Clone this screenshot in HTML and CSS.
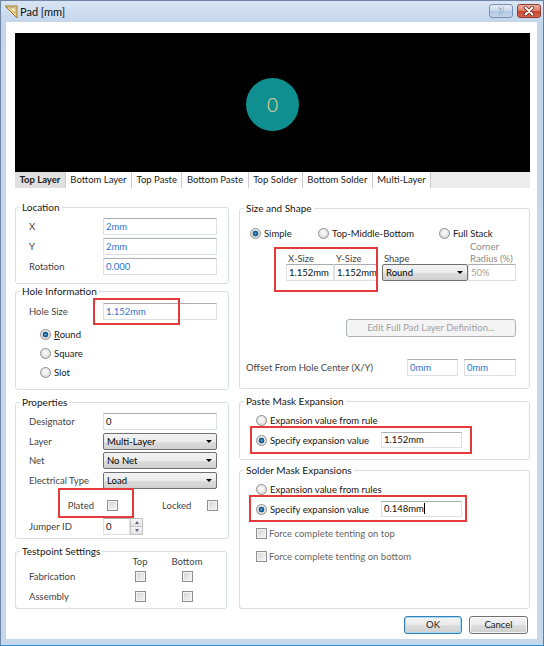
FILE: index.html
```html
<!DOCTYPE html>
<html>
<head>
<meta charset="utf-8">
<title>Pad [mm]</title>
<link rel="stylesheet" href="styles.css">
</head>
<body>
<div class="window">
  <div class="titlebar">
    <svg class="app-icon" width="14" height="14" viewBox="0 0 14 14">
      <path d="M1 1 L13 1 L13 13 Z" fill="#ecd089" stroke="#9b7b35" stroke-width="1" stroke-linejoin="round"/>
      <path d="M6 3 L11 3 L11 8 Z" fill="#fff8e0" stroke="#b5964a" stroke-width="0.6"/>
      <path d="M3 2 L4 3 M5 2 L6 3 M8 2 L9 3" stroke="#8a8a8a" stroke-width="0.8"/>
    </svg>
    <span class="title">Pad [mm]</span>
    <div class="caption-btn help">?</div>
    <div class="caption-btn close">
      <svg width="12" height="10" viewBox="0 0 12 10">
        <path d="M2.5 1.5 L9.5 8.5 M9.5 1.5 L2.5 8.5" stroke="#6a2a22" stroke-width="3.4" stroke-linecap="round"/>
        <path d="M2.5 1.5 L9.5 8.5 M9.5 1.5 L2.5 8.5" stroke="#ffffff" stroke-width="1.8" stroke-linecap="round"/>
      </svg>
    </div>
  </div>

  <div class="client">
    <div class="preview"><div class="pad">0</div></div>

    <div class="tabs">
      <div class="tab active">Top Layer</div>
      <div class="tab">Bottom Layer</div>
      <div class="tab">Top Paste</div>
      <div class="tab">Bottom Paste</div>
      <div class="tab">Top Solder</div>
      <div class="tab">Bottom Solder</div>
      <div class="tab">Multi-Layer</div>
    </div>

    <div class="columns">
      <div class="col col-left">
        <fieldset class="grp grp-location">
          <legend>Location</legend>
          <div class="form-grid pt5">
            <span class="lbl">X</span><div class="input blue">2mm</div>
            <span class="lbl">Y</span><div class="input blue">2mm</div>
            <span class="lbl">Rotation</span><div class="input blue">0.000</div>
          </div>
        </fieldset>

        <fieldset class="grp grp-hole">
          <legend>Hole Information</legend>
          <div class="form-grid pt6">
            <span class="lbl">Hole Size</span><div class="input blue">1.152mm</div>
          </div>
          <div class="radio-list">
            <div class="radio-item"><span class="radio on"></span><span><u>R</u>ound</span></div>
            <div class="radio-item"><span class="radio"></span><span>Square</span></div>
            <div class="radio-item"><span class="radio"></span><span>Slot</span></div>
          </div>
        </fieldset>

        <fieldset class="grp grp-props">
          <legend>Properties</legend>
          <div class="form-grid pt5 tight">
            <span class="lbl">Designator</span><div class="input">0</div>
            <span class="lbl">Layer</span><div class="combo">Multi-Layer</div>
            <span class="lbl">Net</span><div class="combo">No Net</div>
            <span class="lbl">Electrical Type</span><div class="combo">Load</div>
          </div>
          <div class="plated-row">
            <span class="lbl plated-lbl">Plated</span><span class="cb"></span>
            <span class="lbl locked-lbl">Locked</span><span class="cb"></span>
          </div>
          <div class="form-grid jumper-row">
            <span class="lbl">Jumper ID</span>
            <div class="spin">
              <div class="input spin-input">0</div>
              <div class="spin-btns"><span class="spin-up"></span><span class="spin-down"></span></div>
            </div>
          </div>
        </fieldset>

        <fieldset class="grp grp-testpoint">
          <legend>Testpoint Settings</legend>
          <div class="tp-grid">
            <span></span><span class="tp-head">Top</span><span class="tp-head">Bottom</span>
            <span class="lbl">Fabrication</span><span class="cb"></span><span class="cb"></span>
            <span class="lbl">Assembly</span><span class="cb"></span><span class="cb"></span>
          </div>
        </fieldset>

        <div class="mark mark-hole"></div>
        <div class="mark mark-plated"></div>
      </div>

      <div class="col col-right">
        <fieldset class="grp grp-size">
          <legend>Size and Shape</legend>
          <div class="size-body">
            <div class="mode-row">
              <div class="radio-item mode-simple"><span class="radio on"></span><span>Simple</span></div>
              <div class="radio-item mode-tmb"><span class="radio"></span><span>Top-Middle-Bottom</span></div>
              <div class="radio-item"><span class="radio"></span><span>Full Stack</span></div>
            </div>
            <div class="size-grid">
              <span></span><span></span><span></span><span></span><span class="hdr dim">Corner</span>
              <span class="hdr">X-Size</span><span class="hdr">Y-Size</span><span></span><span class="hdr">Shape</span><span class="hdr dim">Radius (%)</span>
              <div class="input">1.152mm</div><div class="input">1.152mm</div><span></span><div class="combo">Round</div><div class="input dim">50%</div>
            </div>
            <div class="edit-btn">Edit Full Pad Layer Definition...</div>
            <div class="offset-row">
              <span class="lbl offset-lbl">Offset From Hole Center (X/Y)</span>
              <div class="input blue off1">0mm</div>
              <div class="input blue off2">0mm</div>
            </div>
          </div>
        </fieldset>

        <fieldset class="grp grp-paste">
          <legend>Paste Mask Expansion</legend>
          <div class="mask-body">
            <div class="radio-item row14"><span class="radio"></span><span class="dark">Expansion value from rule</span></div>
            <div class="spec-row">
              <div class="radio-item spec-item"><span class="radio on"></span><span class="dark">Specify expansion value</span></div>
              <div class="input spec-input">1.152mm</div>
            </div>
          </div>
        </fieldset>

        <fieldset class="grp grp-solder">
          <legend>Solder Mask Expansions</legend>
          <div class="mask-body">
            <div class="radio-item row14"><span class="radio"></span><span class="dark">Expansion value from rules</span></div>
            <div class="spec-row">
              <div class="radio-item spec-item"><span class="radio on"></span><span class="dark">Specify expansion value</span></div>
              <div class="input spec-input">0.148mm<span class="caret"></span></div>
            </div>
            <div class="check-item"><span class="cb"></span><span class="muted">Force complete tenting on top</span></div>
            <div class="check-item"><span class="cb"></span><span class="muted">Force complete tenting on bottom</span></div>
          </div>
        </fieldset>

        <div class="mark mark-size"></div>
        <div class="mark mark-paste"></div>
        <div class="mark mark-solder"></div>
      </div>
    </div>

    <div class="buttons">
      <div class="btn default">OK</div>
      <div class="btn">Cancel</div>
    </div>
  </div>
</div>
</body>
</html>
```

FILE: styles.css
```css
* { box-sizing: border-box; }
html, body { margin: 0; padding: 0; }
body {
  width: 544px;
  height: 646px;
  overflow: hidden;
  font-family: Lato, "Open Sans", "Liberation Sans", sans-serif;
  font-size: 9.5px;
  color: #1c1c1c;
  background: #fff;
}

.window {
  width: 544px;
  height: 646px;
  display: flex;
  flex-direction: column;
  background: linear-gradient(#d9e5f3, #c4d6eb 21px, #c6d8ec);
  border: 1px solid #6f87a4;
  border-right: 1px solid #2f8fd6;
  border-bottom: 1px solid #2f8fd6;
}

/* ---------- title bar ---------- */
.titlebar {
  height: 21px;
  display: flex;
  align-items: center;
  padding-left: 3px;
  flex: none;
}
.app-icon { flex: none; }
.title {
  margin-left: 2px;
  font-size: 11px;
  color: #101010;
}
.caption-btn {
  align-self: flex-start;
  margin-top: 3px;
  width: 24px;
  height: 14px;
  border-radius: 3px;
  display: flex;
  align-items: center;
  justify-content: center;
}
.help {
  margin-left: auto;
  border: 1px solid #7890b0;
  background: linear-gradient(#e4edf7, #c9d9ec 50%, #b2c8e2 51%, #c4d7ec);
  color: #f7f9fc;
  font-weight: 700;
  font-size: 11px;
  line-height: 12px;
  text-shadow: 0 0 1px #3c5678, 0 0 1px #3c5678;
}
.close {
  margin-left: 4px;
  margin-right: 2px;
  border: 1px solid #8b3b31;
  background: linear-gradient(#eeb0a2, #dc7d6a 50%, #c5452f 51%, #d6674f);
}

/* ---------- client area ---------- */
.client {
  flex: 1;
  margin: 0 6px 6px 5px;
  background: #fff;
  padding: 11px 7px 0 9px;
  display: flex;
  flex-direction: column;
}

.preview {
  height: 139px;
  background: #000;
  display: flex;
  align-items: center;
  justify-content: center;
  padding-top: 3px;
}
.pad {
  width: 53px;
  height: 53px;
  border-radius: 50%;
  background: #0f8f8f;
  display: flex;
  align-items: center;
  justify-content: center;
  color: #f3d9a0;
  font-size: 19px;
  font-weight: 300;
}

.tabs {
  display: flex;
  height: 16px;
  background: #ececec;
  flex: none;
}
.tab {
  padding: 0 4.5px;
  line-height: 16px;
  background: #fff;
  border-right: 1px solid #cdcdcd;
  color: #1a1a1a;
  white-space: nowrap;
}
.tab.active {
  background: #e0e0e0;
  font-weight: 700;
}

.columns {
  display: flex;
  gap: 10px;
  margin-top: 13px;
}
.col {
  position: relative;
  display: flex;
  flex-direction: column;
}
.col-left { width: 214px; }
.col-right { width: 291px; margin-top: 1px; }

/* ---------- group boxes ---------- */
.grp {
  margin: 0;
  padding: 0;
  min-width: 0;
  border: 1px solid #d5dfe5;
  border-radius: 3px;
}
.grp legend {
  padding: 0 2px;
  margin-left: 4px;
  line-height: 12px;
  font-size: 10px;
  color: #161616;
}
.grp-location { height: 83px; }
.grp-hole { height: 105px; margin-top: 1px; }
.grp-props { height: 143px; margin-top: 6px; }
.grp-testpoint { height: 64px; margin-top: 6px; width: 212px; }
.grp-size { height: 187px; }
.grp-paste { height: 65px; margin-top: 6px; }
.grp-solder { height: 145px; margin-top: 4px; }

.lbl { color: #444; white-space: nowrap; }
.dark { color: #161616; }
.muted { color: #666; }

.form-grid {
  display: grid;
  grid-template-columns: 74px 114px;
  grid-auto-rows: 17px;
  row-gap: 3px;
  padding-left: 13px;
  align-items: center;
}
.form-grid.tight { row-gap: 2.5px; }
.pt5 { padding-top: 5px; }
.pt6 { padding-top: 6px; }

/* ---------- controls ---------- */
.input {
  height: 17px;
  border: 1px solid #dde1e6;
  border-top-color: #abadb3;
  background: #fff;
  padding-left: 2px;
  line-height: 15px;
  color: #111;
  white-space: nowrap;
  overflow: hidden;
}
.input.blue { color: #2f74d0; }
.input.dim { color: #a3a3a3; }
.caret {
  display: inline-block;
  width: 1px;
  height: 11px;
  background: #000;
  vertical-align: -2px;
}

.combo {
  height: 17px;
  border: 1px solid #707070;
  border-radius: 2px;
  background: linear-gradient(#f3f3f3, #ebebeb 50%, #dddddd 51%, #d0d0d0);
  padding-left: 3px;
  line-height: 15px;
  color: #000;
  display: flex;
  align-items: center;
}
.combo::after {
  content: "";
  margin-left: auto;
  margin-right: 4px;
  border-left: 3px solid transparent;
  border-right: 3px solid transparent;
  border-top: 3px solid #000;
}

.radio {
  flex: none;
  width: 11px;
  height: 11px;
  border-radius: 50%;
  border: 1px solid #8e8f8f;
  background: radial-gradient(circle at 50% 40%, #ffffff, #e2e2e2 60%, #cfcfcf);
  margin-right: 3px;
}
.radio.on {
  background:
    radial-gradient(circle at 50% 50%, #4ea6da 0, #1c6399 1.8px, #0f4a7c 2.6px, rgba(255,255,255,0) 3.2px),
    radial-gradient(circle at 50% 40%, #ffffff, #e2e2e2 60%, #cfcfcf);
}

.cb {
  display: block;
  flex: none;
  width: 11px;
  height: 11px;
  border: 1px solid #8f8f8f;
  background: linear-gradient(135deg, #d3d3d3, #f7f7f7);
  box-shadow: inset 0 0 0 1px #f4f4f4;
}

.radio-item {
  display: flex;
  align-items: center;
  white-space: nowrap;
  color: #1a1a1a;
}
.radio-list { padding: 5px 0 0 24px; }
.radio-list .radio-item { height: 19px; }

.plated-row {
  display: flex;
  align-items: center;
  height: 18px;
  margin-top: 7.5px;
  padding-left: 13px;
}
.plated-lbl { width: 65px; text-align: right; margin-right: 13px; }
.locked-lbl { width: 45px; margin-left: 44px; }

.jumper-row { margin-top: 4px; }
.spin { display: flex; height: 17px; }
.spin-input { width: 27px; }
.spin-btns {
  width: 13px;
  display: flex;
  flex-direction: column;
}
.spin-btns span {
  flex: 1;
  border: 1px solid #c3c3c3;
  background: linear-gradient(#f7f7f7, #e3e3e3);
  display: flex;
  align-items: center;
  justify-content: center;
}
.spin-btns .spin-down { border-top: none; }
.spin-up::after {
  content: "";
  border-left: 2.5px solid transparent;
  border-right: 2.5px solid transparent;
  border-bottom: 3px solid #4c6a8c;
}
.spin-down::after {
  content: "";
  border-left: 2.5px solid transparent;
  border-right: 2.5px solid transparent;
  border-top: 3px solid #4c6a8c;
}

.tp-grid {
  display: grid;
  grid-template-columns: 97px 28px 66px;
  grid-template-rows: 9px 20px 20px;
  padding-left: 13px;
  align-items: center;
  justify-items: center;
}
.tp-grid .lbl { justify-self: start; }
.tp-head { color: #444; line-height: 9px; }

/* ---------- size and shape ---------- */
.size-body { padding: 12px 0 0 6px; }
.mode-row {
  display: flex;
  align-items: center;
  height: 14px;
  padding-left: 4px;
}
.mode-simple { width: 68px; }
.mode-tmb { width: 121px; }

.size-grid {
  display: grid;
  grid-template-columns: 48px 44px 4px 86px 48px;
  grid-template-rows: 12px 12px 17px;
  margin-left: 40px;
  align-items: center;
}
.hdr { color: #444; padding-left: 2px; white-space: nowrap; }
.hdr.dim { color: #8c8c8c; }

.edit-btn {
  margin: 38px 0 0 100px;
  width: 170px;
  height: 18px;
  border: 1px solid #adb2b5;
  border-radius: 3px;
  background: #f4f4f4;
  color: #a0a0a0;
  text-align: center;
  line-height: 16px;
}

.offset-row {
  display: flex;
  align-items: center;
  margin-top: 22px;
  height: 17px;
}
.offset-lbl { width: 161px; }
.off1 { width: 51px; }
.off2 { width: 52px; margin-left: 6px; }

/* ---------- mask groups ---------- */
.mask-body { padding: 6px 0 0 16px; }
.row14 { height: 14px; }
.spec-row {
  display: flex;
  align-items: center;
  height: 16px;
  margin-top: 5px;
}
.spec-item { width: 125px; }
.spec-input { width: 81px; height: 16px; line-height: 14px; }

.check-item {
  display: flex;
  align-items: center;
  height: 14px;
  margin-top: 9px;
  white-space: nowrap;
}
.check-item .cb { margin-right: 2px; }

/* ---------- annotation marks ---------- */
.mark {
  position: absolute;
  border: 2px solid #e63a3a;
}
.mark-hole { left: 78px; top: 97px; width: 87px; height: 27px; }
.mark-plated { left: 43px; top: 287px; width: 76px; height: 30px; }
.mark-size { left: 35px; top: 45px; width: 104px; height: 45px; }
.mark-paste { left: 11px; top: 224px; width: 222px; height: 28px; }
.mark-solder { left: 10px; top: 293px; width: 218px; height: 27px; }

/* ---------- dialog buttons ---------- */
.buttons {
  display: flex;
  justify-content: flex-end;
  gap: 7px;
  margin-top: 7px;
  padding-right: 2px;
}
.btn {
  width: 59px;
  height: 18px;
  border: 1px solid #707070;
  border-radius: 3px;
  background: linear-gradient(#f3f3f3, #ebebeb 50%, #dddddd 51%, #cfcfcf);
  box-shadow: inset 0 0 0 1px rgba(255,255,255,0.8);
  text-align: center;
  line-height: 16px;
  color: #1a1a1a;
}
.btn.default {
  width: 58px;
  border-color: #3c7fb1;
  box-shadow: inset 0 0 0 1px #9fdcf8;
}
```
